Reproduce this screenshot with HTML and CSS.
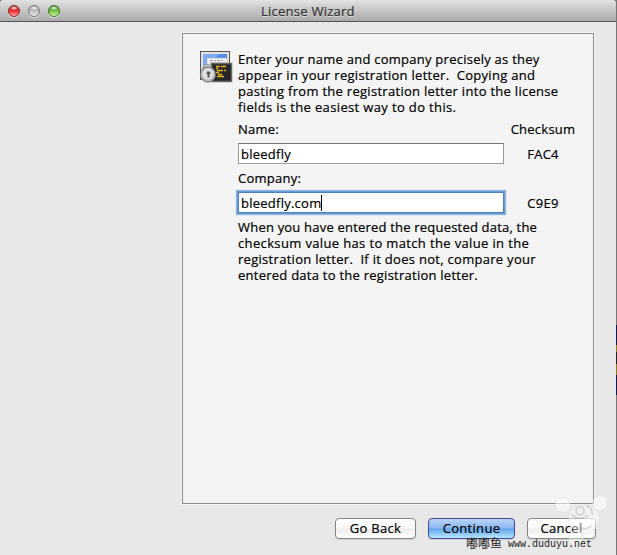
FILE: index.html
```html
<!DOCTYPE html>
<html lang="en">
<head>
    <meta charset="UTF-8">
    <title>License Wizard</title>
    <link rel="stylesheet" href="styles.css">
</head>
<body>
    <div class="desktop">
        <div class="window">
            <header class="titlebar">
                <div class="lights">
                    <span class="light red"></span>
                    <span class="light gray"></span>
                    <span class="light green"></span>
                </div>
                <h1>License Wizard</h1>
            </header>
            <main class="panel">
                <svg class="icon" width="34" height="34" viewBox="0 0 34 34">
                    <rect x="1.500" y="1.500" width="29" height="28" fill="#e2e2e2" stroke="#555"/>
                    <rect x="4" y="4" width="24" height="19" fill="#568bea"/>
                    <path d="M4 4h17L4 19z" fill="#80acf7"/>
                    <rect x="8" y="8" width="20" height="12" fill="#f4f4f4" stroke="#aaa" stroke-width=".6"/>
                    <path d="M11 10.500h13" stroke="#99a" stroke-dasharray="3 1 2 1"/>
                    <path d="M10 12.500h16" stroke="#ccc"/>
                    <rect x="12.500" y="13.500" width="20" height="18" fill="#272727" stroke="#686868" stroke-width="1.500"/>
                    <path d="M17 16.500h4M22 16.500h5M17 18.500h2M18 20.500h6M17 22.500h3M19 24.500h4M18 26.500h7M25 20.500h2" stroke="#e5b51d" stroke-width="1.500"/>
                    <path d="M5 22v-3a3.500 3.500 0 0 1 7 0v2" fill="none" stroke="#888" stroke-width="3"/>
                    <path d="M5 22v-3a3.500 3.500 0 0 1 7 0v2" fill="none" stroke="#ddd" stroke-width="1.500"/>
                    <circle cx="9" cy="24.500" r="7.700" fill="#b5b5b5" stroke="#666" stroke-width=".8"/>
                    <circle cx="9" cy="24" r="5" fill="#ddd" stroke="#eee"/>
                    <path d="M9.500 21.500a1.500 1.500 0 0 1 .8 3l.4 3H8.300l.5-3a1.500 1.500 0 0 1 .7-3z" fill="#555"/>
                </svg>
                <form class="license">
                    <p>
                        <span>Enter your name and company precisely as they</span>
                        <span class="loose">appear in your registration letter.&nbsp; Copying and</span>
                        <span class="loose">pasting from the registration letter into the license</span>
                        <span class="wide">fields is the easiest way to do this.</span>
                    </p>
                    <div class="row labels">
                        <label>Name:</label>
                        <span class="check">Checksum</span>
                    </div>
                    <div class="row">
                        <div class="field">bleedfly</div>
                        <span class="check">FAC4</span>
                    </div>
                    <div class="row labels">
                        <label>Company:</label>
                    </div>
                    <div class="row">
                        <div class="field focused">bleedfly.com<span class="caret"></span></div>
                        <span class="check">C9E9</span>
                    </div>
                    <p class="note">
                        <span class="tight">When you have entered the requested data, the</span>
                        <span class="wide">checksum value has to match the value in the</span>
                        <span class="loose">registration letter.&nbsp; If it does not, compare your</span>
                        <span>entered data to the registration letter.</span>
                    </p>
                </form>
            </main>
            <footer class="buttons">
                <button class="back">Go Back</button>
                <button class="continue">Continue</button>
                <button class="cancel">Cancel</button>
            </footer>
        </div>
        <div class="edge"></div>
    </div>
    <svg class="bear" width="60" height="60" viewBox="0 0 60 60">
        <g fill="#fff" fill-opacity=".55" stroke="#ccc" stroke-opacity=".3">
            <circle cx="14" cy="15" r="7.500"/>
            <circle cx="51" cy="13" r="7.500"/>
            <circle cx="27" cy="48" r="7.500" fill-opacity=".35"/>
            <ellipse cx="35" cy="29" rx="15.500" ry="14.500" fill-opacity=".45"/>
        </g>
        <g fill="none" stroke="#aaa" stroke-opacity=".4" stroke-width="2">
            <circle cx="31" cy="21" r="4"/>
            <path d="M23 24c3 5 13 6 16 1M37 16c5 1 7 5 6 9M43 35c-3 4-9 5-13 2"/>
        </g>
        <path d="M35 28c6-3 12 0 12 4s-6 6-12 4z" fill="#fff" fill-opacity=".4"/>
    </svg>
    <div class="watermark">嘟嘟鱼 <span>www.duduyu.net</span></div>
</body>
</html>
```
FILE: styles.css
```css
body {
    margin: 0;
    overflow: hidden;
    font: 13px/16px "Open Sans", "Noto Sans", sans-serif;
    letter-spacing: 0.25px;
    color: #000;
    -webkit-text-stroke: 0.2px;
}

.desktop {
    display: flex;
    width: 617px;
    height: 555px;
    background: #777;
}

.window {
    flex: 1;
    background: #e8e8e8;
    border-radius: 4px 4px 0 0;
    overflow: hidden;
}

.edge {
    width: 1px;
    background: linear-gradient(#777 0 325px, #111a4d 325px 345px, #8b7920 345px 352px, #222 352px 364px, #8b7920 364px 375px, #111a4d 375px 395px, #777 395px);
}

.titlebar {
    display: flex;
    align-items: center;
    box-sizing: border-box;
    height: 22px;
    padding-left: 8px;
    background: linear-gradient(#e4e4e4, #d3d3d3 25%, #aaa);
    border-bottom: 1px solid #555;
}

.lights {
    display: flex;
    gap: 8px;
}

.light {
    box-sizing: border-box;
    width: 12px;
    height: 12px;
    border: 1px solid #777;
    border-radius: 50%;
    box-shadow: 0 1px 0 #e5e5e5;
}

.red {
    border-color: #8b2929;
    background: radial-gradient(ellipse 4px 2px at 5px 2px, #fff, transparent), linear-gradient(#b92625, #ef3838 55%, #ffaaa5);
}

.gray {
    background: radial-gradient(ellipse 4px 2px at 5px 2px, #fff, transparent), linear-gradient(#aaa, #bdbdbd 50%, #eee);
}

.green {
    border-color: #41722d;
    background: radial-gradient(ellipse 4px 2px at 5px 2px, #fff, transparent), linear-gradient(#438b29, #7bc851 55%, #cff9aa);
}

h1 {
    margin: 0 0 0 201px;
    font-size: 13px;
    font-weight: 400;
    letter-spacing: 0.25px;
    color: #333;
    text-shadow: 0 1px 0 #ddd;
}

.panel {
    display: flex;
    box-sizing: border-box;
    width: 412px;
    height: 471px;
    margin: 11px 0 0 182px;
    padding: 17px 0 0 17px;
    background: #f4f4f4;
    border: 1px solid #8c8c8c;
    box-shadow: 0 0 0 1px #f4f4f4;
}

.icon {
    flex: none;
    margin: -1px 5px 0 -1px;
}

.license {
    width: 350px;
}

p {
    margin: 0;
    white-space: nowrap;
}

p span {
    display: block;
}

.tight {
    letter-spacing: 0.2px;
}

.loose {
    letter-spacing: 0.29px;
}

.wide {
    letter-spacing: 0.36px;
}

.row {
    display: flex;
    align-items: center;
    height: 21px;
}

.labels {
    height: 16px;
    margin: 6px 0;
}

.labels label {
    flex: none;
    width: 266px;
}

.field {
    display: flex;
    align-items: center;
    box-sizing: border-box;
    width: 266px;
    height: 21px;
    padding-left: 2px;
    background: #fff;
    border: 1px solid #999;
    border-top-color: #777;
}

.focused {
    border-color: #4f83bd;
    box-shadow: 0 0 0 1px #6b9dd5, 0 0 1px 2px #8db5df;
}

.caret {
    width: 1px;
    height: 16px;
    background: #000;
}

.check {
    width: 78px;
    text-align: center;
}

.note {
    margin-top: 6px;
}

.buttons {
    display: flex;
    gap: 12px;
    margin: 14px 0 0 335px;
}

button {
    height: 21px;
    padding: 0 0 2px;
    font: inherit;
    letter-spacing: 0.3px;
    border: 1px solid #858585;
    border-radius: 4px;
    background: linear-gradient(#fff, #f8f8f8 48%, #ececec 52%, #fff);
    box-shadow: 0 1px 1px #ccc;
}

.back {
    width: 81px;
}

.continue {
    width: 87px;
    border-color: #4949a0;
    background: linear-gradient(#bbd4f6, #8ab8ef 47%, #64a5ec 53%, #b7e7ff);
}

.cancel {
    width: 69px;
}

.bear {
    position: absolute;
    left: 549px;
    top: 490px;
}

.watermark {
    position: absolute;
    left: 466px;
    top: 535px;
    font: 12px/16px "Noto Sans CJK SC", sans-serif;
    letter-spacing: 0;
    color: #222;
    white-space: pre;
    -webkit-text-stroke: 0;
}

.watermark span {
    position: absolute;
    left: 42px;
    top: 2px;
    font: 10px/16px "Liberation Mono", monospace;
}
```
